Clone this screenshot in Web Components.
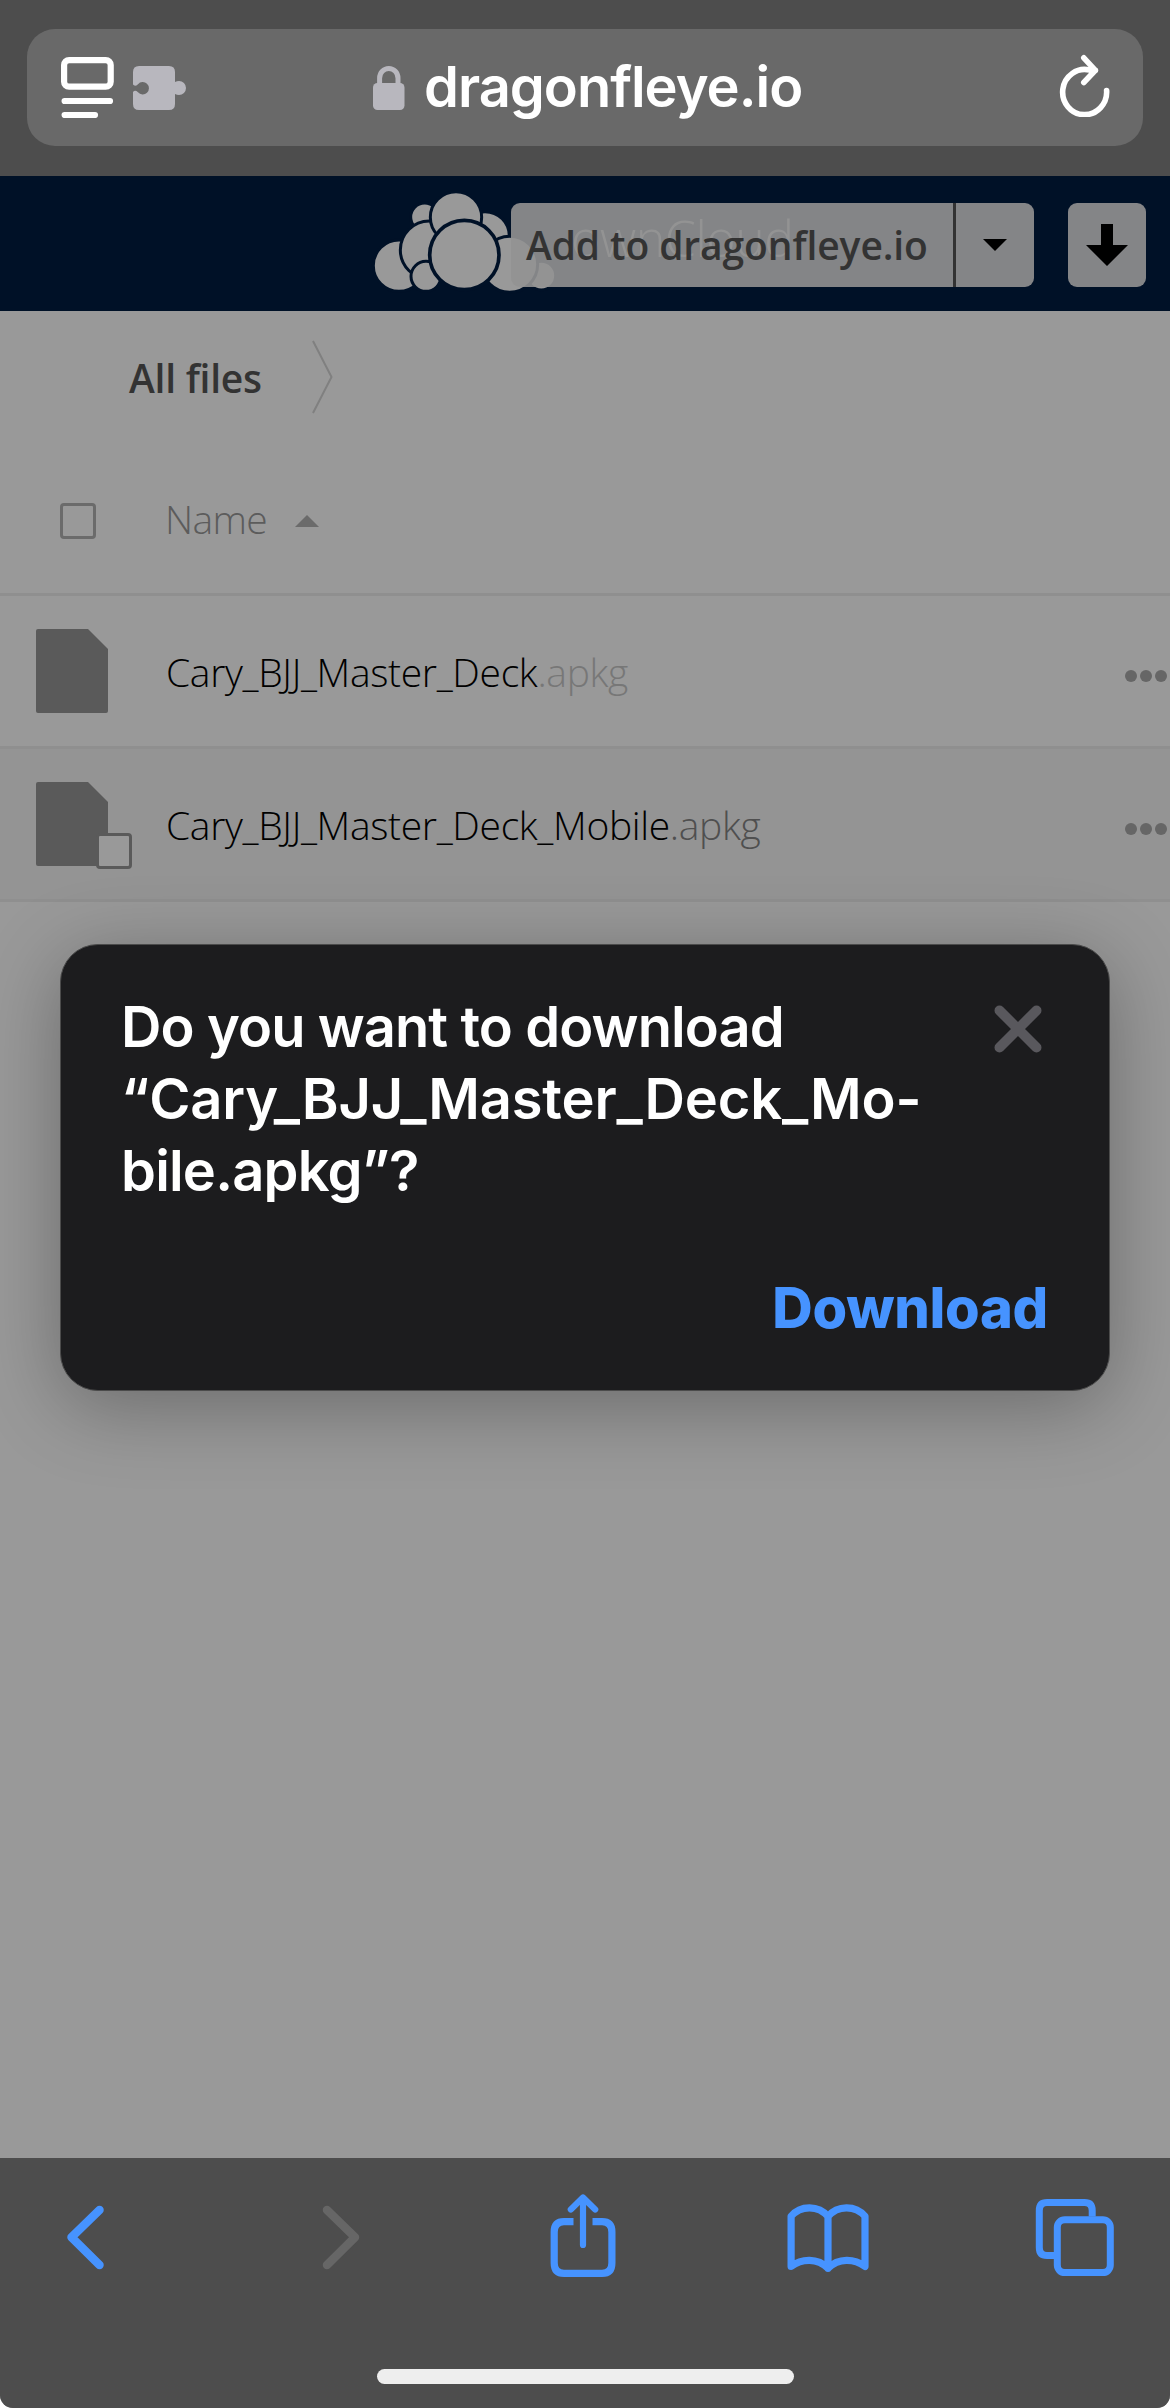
<!DOCTYPE html>
<html lang="en">
<head>
<meta charset="utf-8">
<title>dragonfleye.io</title>
<style>
html { background: #fff; }
body { margin: 0; width: 1170px; height: 2408px; overflow: hidden; }
</style>
</head>
<body>
<phone-screen></phone-screen>
<script>
const define = (name, markup) => {
  const template = document.createElement('template');
  template.innerHTML = markup;
  customElements.define(name, class extends HTMLElement {
    constructor() {
      super();
      this.attachShadow({ mode: 'open' }).append(template.content.cloneNode(true));
    }
  });
};

define('address-bar', `
<style>
:host { display: flex; height: 176px; background: #4d4d4d; box-sizing: border-box; padding: 29px 27px 30px; font-family: Inter, sans-serif; }
.field { flex: 1; display: flex; align-items: center; background: #696969; border-radius: 28px; }
svg { display: block; flex: none; }
.reader { margin-left: 34px; }
.puzzle { margin-left: 19px; }
.site { flex: 1; display: flex; align-items: center; margin-left: 187px; }
.site span { margin: -2px 0 0 19px; font-size: 56px; font-weight: 600; line-height: 72px; color: #fff; white-space: nowrap; letter-spacing: -1px; }
.reload { margin: -6px 32px 0 0; }
</style>
<div class="field">
  <svg class="reader" width="53" height="61" viewBox="0 0 53 61" fill="none" stroke="#fff" stroke-width="6.2" stroke-linecap="round"><rect x="3.1" y="3.1" width="46.6" height="26.6" rx="5"/><path d="M3.6 44H49M3.6 58H34"/></svg>
  <svg class="puzzle" width="53" height="44" viewBox="0 0 53 44" fill="#b8b7be"><path d="M6 0H36Q42 0 42 6V16Q44 15 46 15A7 7 0 0 1 46 29Q44 29 42 28V38Q42 44 36 44H6Q0 44 0 38V26Q2 23.4 5 26.2A6.2 6.2 0 1 0 5 18.2Q2 21 0 18.6V6Q0 0 6 0Z"/></svg>
  <div class="site">
    <svg width="32" height="44" viewBox="0 0 32 44"><path d="M6.6 20V12.2A9.2 9.7 0 0 1 25 12.2V20" fill="none" stroke="#b8b7be" stroke-width="5"/><rect y="17" width="31.5" height="27" rx="4.5" fill="#b8b7be"/></svg>
    <span>dragonfleye.io</span>
  </div>
  <svg class="reload" width="52" height="64" viewBox="0 0 52 64" fill="none" stroke="#fff" stroke-width="5.6" stroke-linecap="round" stroke-linejoin="round"><path d="M47.6 37.5A22 22.6 0 1 1 30.8 17.1L36.4 17.3M24.8 4.8L36.4 17.3L24.8 29.5"/></svg>
</div>`);

define('cloud-header', `
<style>
:host { display: flex; position: relative; height: 135px; background: #001127; font-family: "Open Sans", sans-serif; }
.brand { display: flex; align-items: flex-start; padding: 10px 0 0 370px; }
.brand svg { display: block; }
.brand span { font-size: 50px; font-weight: 300; line-height: 68px; margin: 18px 0 0 12px; color: #999; white-space: nowrap; letter-spacing: -.4px; }
.actions { position: absolute; top: 27px; right: 24px; height: 84px; display: flex; gap: 34px; }
.split { display: flex; background: rgba(146,146,146,.9); border-radius: 9px; overflow: hidden; }
.split span { width: 442px; font-size: 39px; font-weight: 600; line-height: 84px; color: #333; white-space: nowrap; box-sizing: border-box; padding-left: 15px; letter-spacing: -.1px; }
.split i { width: 3px; background: #333; }
.drop { width: 78px; display: flex; align-items: center; justify-content: center; }
.get { width: 78px; background: rgba(146,146,146,.9); border-radius: 9px; display: flex; align-items: center; justify-content: center; }
</style>
<div class="brand">
  <svg width="189" height="104" viewBox="60 48 567 312" fill="#999" stroke="#001127" stroke-width="9" overflow="visible">
    <circle cx="574" cy="317" r="43"/><circle cx="405" cy="198" r="73"/><circle cx="479" cy="283" r="84"/>
    <circle cx="224" cy="141" r="42"/><circle cx="147" cy="287" r="77"/><circle cx="238" cy="240" r="87"/>
    <circle cx="318" cy="142" r="77"/><circle cx="228" cy="319" r="45"/><circle cx="343" cy="255" r="104" stroke-width="11"/>
  </svg>
  <span>ownCloud</span>
</div>
<div class="actions">
  <div class="split"><span>Add to dragonfleye.io</span><i></i><div class="drop"><svg width="24" height="12"><path d="M0 0H24L12 12Z"/></svg></div></div>
  <div class="get"><svg width="42" height="42"><path d="M15 0H27V21H42L21 42L0 21H15Z"/></svg></div>
</div>`);

define('file-crumbs', `
<style>
:host { display: flex; align-items: center; height: 132px; padding-left: 129px; font: 600 39px "Open Sans", sans-serif; color: #333; letter-spacing: -.25px; }
svg { display: block; margin-left: 49px; }
</style>
<slot></slot><svg width="22" height="74" viewBox="0 0 22 74" fill="none" stroke="#808080" stroke-width="2"><path d="M2 1L20.500 37L2 73"/></svg>`);

define('file-columns', `
<style>
:host { display: flex; align-items: center; height: 150px; border-bottom: 3px solid #8f8f8f; padding-left: 60px; font: 300 39px "Open Sans", sans-serif; color: #5c5c5c; letter-spacing: -.7px; }
i { width: 30px; height: 30px; border: 3px solid #6b6b6b; border-radius: 4px; margin: 6px 69px 0 0; }
svg { display: block; margin: 6px 0 0 28.500px; }
</style>
<i></i><slot></slot><svg width="24" height="12" fill="#6b6b6b"><path d="M0 12H24L12 0Z"/></svg>`);

define('file-row', `
<style>
:host { display: flex; align-items: center; height: 150px; border-bottom: 3px solid #8f8f8f; padding: 0 3px 0 36px; font: 300 39px "Open Sans", sans-serif; color: #000; letter-spacing: -.34px; }
:host([active]) { background: #949494; }
.icon { position: relative; width: 72px; height: 84px; margin-right: 58px; }
.icon svg { display: block; }
.icon i { position: absolute; left: 60px; top: 51px; width: 30px; height: 30px; border: 3px solid #5a5a5a; border-radius: 4px; background: #999; display: none; }
:host([active]) .icon i { display: block; }
.name { flex: 1; white-space: nowrap; }
.ext { color: #777; }
:host([active]) .ext { color: #4f4f4f; }
.more { margin-top: 10px; display: block; }
</style>
<div class="icon"><svg width="72" height="84" fill="#5a5a5a"><path d="M2 0H52L72 20V82Q72 84 70 84H2Q0 84 0 82V2Q0 0 2 0Z"/></svg><i></i></div>
<div class="name"><slot></slot><span class="ext"><slot name="ext"></slot></span></div>
<svg class="more" width="42" height="12" fill="#666"><circle cx="6" cy="6" r="6"/><circle cx="21" cy="6" r="6"/><circle cx="36" cy="6" r="6"/></svg>`);

define('download-dialog', `
<style>
:host { position: absolute; left: 60px; top: 944px; width: 1050px; height: 447px; box-sizing: border-box; display: flex; flex-direction: column; justify-content: space-between; padding: 46px 61px 46px 60px; border: 1px solid #4b4b4b; border-radius: 38px; background: #1c1c1e; box-shadow: 0 15px 80px rgba(0,0,0,.3); font-family: Inter, sans-serif; }
.top { display: flex; justify-content: space-between; }
.ask { font-size: 56px; font-weight: 600; line-height: 72px; color: #fff; white-space: nowrap; }
.ask div:nth-child(1) { letter-spacing: -.9px; }
.ask div:nth-child(2) { letter-spacing: -.15px; }
.ask div:nth-child(3) { letter-spacing: -.8px; }
svg { display: block; margin: 14px 6px 0 0; }
.go { align-self: flex-end; font-size: 56px; font-weight: 800; line-height: 72px; color: #4693ff; letter-spacing: -.3px; }
</style>
<div class="top">
  <div class="ask"><div>Do you want to download</div><div>“Cary_BJJ_Master_Deck_Mo-</div><div>bile.apkg”?</div></div>
  <svg width="48" height="48" stroke="#59585d" stroke-width="10" stroke-linecap="round"><path d="M5.500 5.500L42.500 42.500M42.500 5.500L5.500 42.500"/></svg>
</div>
<div class="go">Download</div>`);

define('tool-bar', `
<style>
:host { display: flex; flex-direction: column; align-items: center; height: 250px; background: #4d4d4d; }
.icons { align-self: stretch; display: flex; padding: 32px 0 0 67px; }
svg { display: block; flex: none; fill: none; stroke: #4693ff; stroke-linecap: round; stroke-linejoin: round; }
.next { margin: 0 189.500px 0 217px; stroke: #666; }
.book { margin: 0 166px 0 171px; }
.home { width: 417px; height: 15px; border-radius: 8px; background: #eee; margin-top: 85px; }
</style>
<div class="icons">
  <svg width="38" height="94" viewBox="67 2190 38 94" stroke-width="8.500"><path d="M99.500 2210L71.500 2237.300L99.500 2265"/></svg>
  <svg class="next" width="38" height="94" viewBox="322 2190 38 94" stroke-width="8.500"><path d="M327 2210L355 2237.300L327 2265"/></svg>
  <svg width="66" height="94" viewBox="549.500 2190 66 94" stroke-width="7.200"><path stroke-linecap="butt" d="M573 2221.700H563.500Q553.700 2221.700 553.700 2232V2263Q553.700 2273.400 563.500 2273.400H601.500Q611.400 2273.400 611.400 2263V2232Q611.400 2221.700 601.500 2221.700H592"/><path stroke-width="6.200" d="M582.500 2245V2198.500M570.300 2209.500L582.500 2197.500L594.700 2209.500"/></svg>
  <svg class="book" width="82" height="94" viewBox="786.500 2190 82 94" stroke-width="7.200"><path d="M827.500 2268.300V2216.500C818 2205 800 2205 790.600 2216.300V2266.500C801 2258.500 817 2257.500 827.500 2268.300C838 2257.500 854 2258.500 864.500 2266.500V2216.300C855 2205 837 2205 827.500 2216.500"/></svg>
  <svg width="79" height="94" viewBox="1034.500 2190 79 94" stroke-width="7"><rect x="1056.800" y="2219.800" width="53" height="52.800" rx="7.500"/><path stroke-linecap="butt" d="M1053.500 2255.500H1046.500Q1038.800 2255.500 1038.800 2247.500V2210.500Q1038.800 2202.600 1046.500 2202.600H1084Q1091.700 2202.600 1091.700 2210.500V2216.500"/></svg>
</div>
<div class="home"></div>`);

define('phone-screen', `
<style>
:host { position: relative; display: flex; flex-direction: column; width: 1170px; height: 2408px; overflow: hidden; background: #999; border-radius: 0 0 13px 13px; }
main { flex: 1; }
</style>
<address-bar></address-bar>
<cloud-header></cloud-header>
<main>
  <file-crumbs>All files</file-crumbs>
  <file-columns>Name</file-columns>
  <file-row>Cary_BJJ_Master_Deck<span slot="ext">.apkg</span></file-row>
  <file-row active>Cary_BJJ_Master_Deck_Mobile<span slot="ext">.apkg</span></file-row>
</main>
<tool-bar></tool-bar>
<download-dialog></download-dialog>`);
</script>
</body>
</html>
